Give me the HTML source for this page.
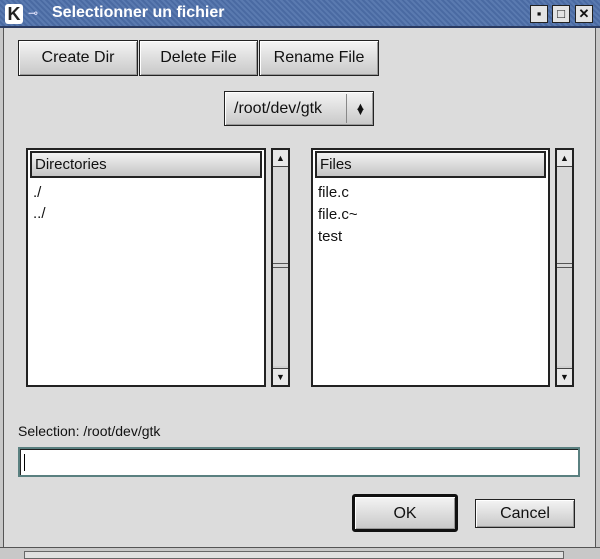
<!DOCTYPE html><html><head><style>
*{box-sizing:border-box}
body{margin:0;width:600px;height:559px;background:#dcdcdc;font-family:"Liberation Sans",sans-serif;font-size:15px;color:#111;position:relative;overflow:hidden}
.a{position:absolute}
.title{left:0;top:0;width:600px;height:28px;background:repeating-linear-gradient(45deg,#5a7ab0 0 2px,#4a6aa2 2px 4px);border-bottom:2px solid #2a3a60}
.btn{position:absolute;border:1px solid #222;background:linear-gradient(#f4f4f4,#c8c8c8);box-shadow:inset 1px 1px 0 #fff,inset -1px -1px 0 #999;text-align:center;font-size:16px}
.list{position:absolute;border:2px solid #222;background:#fff}
.hdr{position:absolute;left:2px;top:1px;right:2px;height:27px;border:2px solid #222;background:linear-gradient(#f2f2f2,#c4c4c4);padding:3px 3px;font-size:15px}
.sb{position:absolute;width:19px;border:2px solid #222;background:#cfcfcf}
.wb{position:absolute;top:5px;width:18px;height:18px;background:#e4e4e4;border:1px solid #222;font-size:13px;font-weight:bold;text-align:center;line-height:16px}
</style></head><body>
<div class="a title"></div>
<div class="a" style="left:5px;top:4px;width:18px;height:20px;background:#fff;color:#222;font-weight:bold;font-size:18px;line-height:20px;text-align:center;border-radius:3px">K</div>
<div class="a" style="left:28px;top:6px;color:#e8e8ff;font-size:12px">⊸</div>
<div class="a" style="left:52px;top:4px;color:#fff;font-weight:bold;font-size:16px">Selectionner un fichier</div>
<div class="wb" style="left:530px">▪</div><div class="wb" style="left:552px">□</div><div class="wb" style="left:575px">✕</div>
<div class="a" style="left:0;top:28px;width:4px;height:531px;background:#c8c8c8;border-right:1px solid #555"></div>
<div class="a" style="right:0;top:28px;width:5px;height:531px;background:#c8c8c8;border-left:1px solid #555"></div>
<div class="a" style="left:0;top:547px;width:600px;height:12px;background:#c8c8c8;border-top:1px solid #555"></div>
<div class="a" style="left:24px;top:551px;width:540px;height:8px;background:#e0e0e0;border:1px solid #666"></div>

<div class="btn" style="left:18px;top:40px;width:120px;height:36px;line-height:34px">Create Dir</div>
<div class="btn" style="left:139px;top:40px;width:119px;height:36px;line-height:34px">Delete File</div>
<div class="btn" style="left:259px;top:40px;width:120px;height:36px;line-height:34px">Rename File</div>
<div class="btn" style="left:224px;top:91px;width:150px;height:35px;line-height:33px;text-align:left;padding-left:9px">/root/dev/gtk<span class="a" style="left:121px;top:2px;width:1px;height:29px;background:#888"></span><span class="a" style="left:130px;top:0;font-size:11px;line-height:14px;top:8px">▲<br></span><span class="a" style="left:130px;top:15px;font-size:11px;line-height:11px">▼</span></div>

<div class="list" style="left:26px;top:148px;width:240px;height:239px"><div class="hdr">Directories</div>
<div class="a" style="left:5px;top:32px;line-height:21px">./<br>../</div></div>
<div class="sb" style="left:271px;top:148px;height:239px"><div class="a" style="left:0;top:0;width:15px;height:17px;background:#e8e8e8;border-bottom:1px solid #444;font-size:9px;text-align:center;line-height:17px">▲</div><div class="a" style="left:0;top:17px;width:15px;height:199px;background:#d8d8d8"></div><div class="a" style="left:0;top:113px;width:15px;height:5px;border-top:1px solid #555;border-bottom:1px solid #555"></div><div class="a" style="left:0;bottom:0;width:15px;height:17px;background:#e8e8e8;border-top:1px solid #444;font-size:9px;text-align:center;line-height:17px">▼</div></div>

<div class="list" style="left:311px;top:148px;width:239px;height:239px"><div class="hdr">Files</div>
<div class="a" style="left:5px;top:32px;line-height:22px">file.c<br>file.c~<br>test</div></div>
<div class="sb" style="left:555px;top:148px;height:239px"><div class="a" style="left:0;top:0;width:15px;height:17px;background:#e8e8e8;border-bottom:1px solid #444;font-size:9px;text-align:center;line-height:17px">▲</div><div class="a" style="left:0;top:17px;width:15px;height:199px;background:#d8d8d8"></div><div class="a" style="left:0;top:113px;width:15px;height:5px;border-top:1px solid #555;border-bottom:1px solid #555"></div><div class="a" style="left:0;bottom:0;width:15px;height:17px;background:#e8e8e8;border-top:1px solid #444;font-size:9px;text-align:center;line-height:17px">▼</div></div>

<div class="a" style="left:18px;top:423px;font-size:14px">Selection: /root/dev/gtk</div>
<div class="a" style="left:18px;top:447px;width:562px;height:30px;border:2px solid #5a8080;background:#fff;box-shadow:inset 1px 1px 0 #222"><div class="a" style="left:4px;top:5px;width:1px;height:17px;background:#000"></div></div>

<div class="btn" style="left:352px;top:494px;width:106px;height:38px;line-height:34px;border:3px solid #111;border-radius:3px">OK</div>
<div class="btn" style="left:475px;top:499px;width:100px;height:29px;line-height:27px">Cancel</div>
</body></html>
